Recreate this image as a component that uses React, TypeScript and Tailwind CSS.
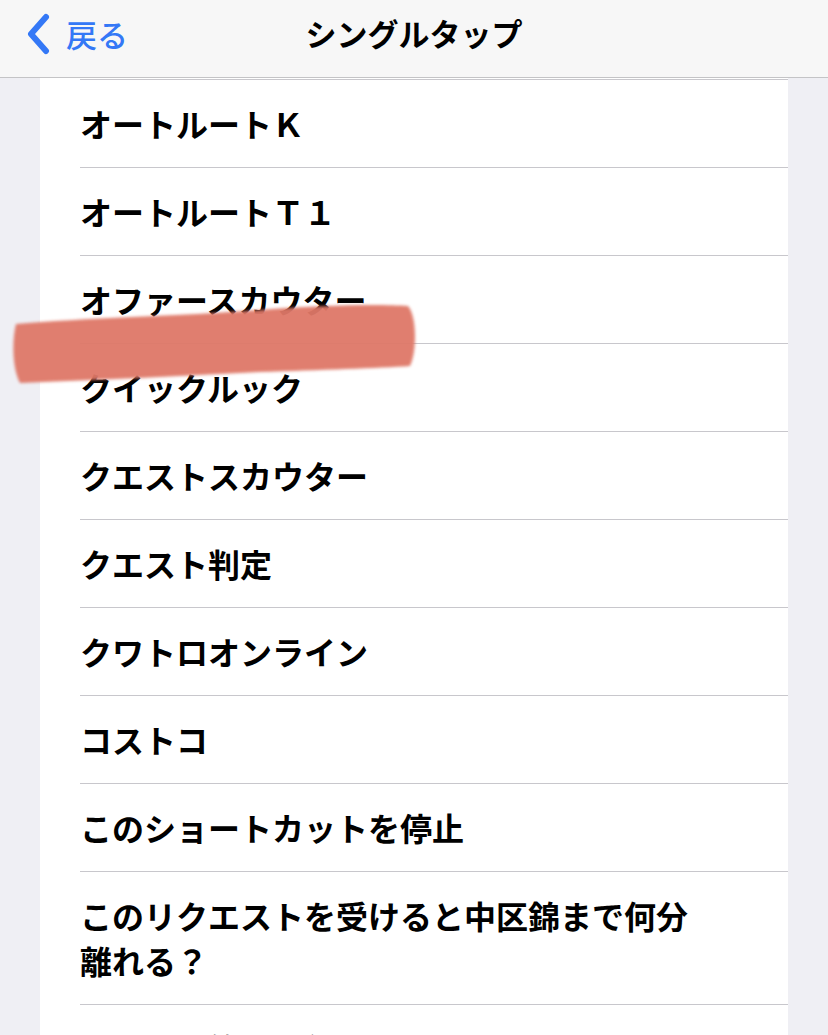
import React from "react";

const rows: string[][] = [
  ["オートルートＫ"],
  ["オートルートＴ１"],
  ["オファースカウター"],
  ["クイックルック"],
  ["クエストスカウター"],
  ["クエスト判定"],
  ["クワトロオンライン"],
  ["コストコ"],
  ["このショートカットを停止"],
  ["このリクエストを受けると中区錦まで何分", "離れる？"],
  ["ここから竹ぜ　行きますか"],
];

export default function App() {
  const font = {
    fontFamily:
      '"Noto Sans CJK JP", "Noto Sans", "Liberation Sans", sans-serif',
  };
  return (
    <div
      className="relative w-[828px] h-[1035px] overflow-hidden bg-[#efeff4]"
      style={font}
    >
      <div className="h-[78px] bg-[#f7f7f7] border-b border-[#c4c4c6] flex items-center relative">
        <div className="flex items-center pl-[24px] pb-[10px]">
          <svg width="28" height="42" viewBox="0 0 28 42" className="mr-[14px]">
            <path
              d="M22 4 L7 21 L22 38"
              fill="none"
              stroke="#3478f6"
              strokeWidth="6"
              strokeLinecap="round"
              strokeLinejoin="round"
            />
          </svg>
          <span className="text-[31px] leading-none font-medium text-[#3478f6]">
            戻る
          </span>
        </div>
        <div className="absolute left-0 right-0 top-0 h-[64px] flex items-center justify-center pointer-events-none">
          <span className="text-[31px] leading-none font-bold text-black">
            シングルタップ
          </span>
        </div>
      </div>
      <div className="mx-[40px] bg-white">
        <div className="h-[1px] bg-white" />
        {rows.map((lines, i) => (
          <div key={i} className="pl-[40px]">
            <div className="border-t border-[#c8c7cc] pt-[21px] pb-[21px] pr-[20px]">
              {lines.map((l, j) => (
                <div
                  key={j}
                  className="text-[32px] leading-[45px] font-bold text-black whitespace-nowrap"
                >
                  {l}
                </div>
              ))}
            </div>
          </div>
        ))}
      </div>
      <svg
        className="absolute left-0 top-[296px] pointer-events-none"
        width="430"
        height="100"
        viewBox="0 0 430 100"
      >
        <defs>
          <filter id="soft" x="-5%" y="-20%" width="110%" height="140%">
            <feGaussianBlur stdDeviation="1.4" />
          </filter>
        </defs>
        <path
          d="M16 28 C 80 22, 180 20, 260 14 C 320 9, 380 8, 408 10 C 417 20, 417 56, 410 70 C 380 72, 320 74, 260 76 C 180 80, 100 84, 20 87 C 12 72, 12 44, 16 28 Z"
          fill="#df7867"
          opacity="0.95"
          filter="url(#soft)"
        />
      </svg>
    </div>
  );
}
